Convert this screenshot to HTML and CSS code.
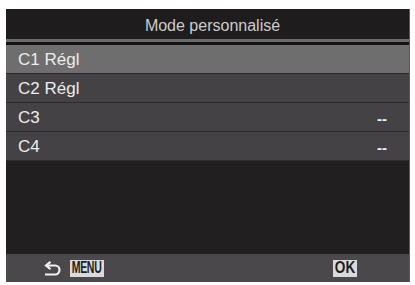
FILE: index.html
```html
<!DOCTYPE html>
<html>
<head>
<meta charset="utf-8">
<link rel="stylesheet" href="styles.css">
</head>
<body>
<div class="screen">
  <div class="title">Mode personnalisé</div>
  <div class="sep"></div>
  <div class="list">
    <div class="row sel"><span>C1 Régl</span></div>
    <div class="row"><span>C2 Régl</span></div>
    <div class="row"><span>C3</span><span class="val">--</span></div>
    <div class="row"><span>C4</span><span class="val">--</span></div>
  </div>
  <div class="space"></div>
  <div class="footer">
    <div class="left">
      <svg class="back" width="20" height="16" viewBox="0 0 20 16">
        <path d="M4 4.5 H12 A4.5 4.5 0 0 1 12 13.5 H2" fill="none" stroke="#f0f0f0" stroke-width="2.2"/>
        <path d="M7.5 0.8 L3 4.5 L7.5 8.2" fill="none" stroke="#f0f0f0" stroke-width="2.2"/>
      </svg>
      <span class="badge menu"><span class="sq">MENU</span></span>
    </div>
    <span class="badge ok"><span class="sq2">OK</span></span>
  </div>
</div>
</body>
</html>
```
FILE: styles.css
```css
html, body {
  margin: 0;
  padding: 0;
  background: #ffffff;
}
body {
  font-family: "Liberation Sans", Arial, sans-serif;
}
.screen {
  margin: 9px 0 0 6px;
  width: 404px;
  height: 273px;
  display: flex;
  flex-direction: column;
  background: #211e1f;
  border-right: 1px solid #5a5a5a;
  box-sizing: border-box;
}
.title {
  height: 30px;
  display: flex;
  align-items: center;
  justify-content: center;
  padding-top: 3px;
  padding-left: 10px;
  box-sizing: border-box;
  background: #1e1c1d;
  color: #cdcdcd;
  font-size: 16px;
}
.sep {
  height: 3px;
  background: #6b6a6b;
  border-bottom: 3px solid #141213;
}
.list {
  display: flex;
  flex-direction: column;
}
.row {
  height: 28px;
  border-bottom: 1px solid #2c2a2b;
  background: #444244;
  color: #ececec;
  font-size: 17px;
  display: flex;
  align-items: center;
  justify-content: space-between;
  padding: 2px 22px 0 12px;
  box-sizing: content-box;
  height: 26px;
}
.row.sel {
  background: #6f6e6f;
}
.val {
  font-weight: bold;
  font-size: 15px;
  color: #f4f4f4;
}
.space {
  flex: 1;
  background: #221f20;
}
.footer {
  height: 28px;
  background: #4a484a;
  display: flex;
  align-items: center;
  justify-content: space-between;
  padding: 0 52px 0 37px;
}
.left {
  display: flex;
  align-items: center;
  gap: 7px;
}
.back {
  display: block;
  margin-top: 1px;
}
.badge {
  background: #dadada;
  color: #1e1e1e;
  font-weight: bold;
  height: 17px;
  display: flex;
  align-items: center;
  justify-content: center;
  overflow: hidden;
}
.menu {
  width: 34px;
}
.ok {
  width: 24px;
}
.sq {
  display: inline-block;
  font-size: 16px;
  transform: scaleX(0.66);
  letter-spacing: -0.5px;
}
.sq2 {
  display: inline-block;
  font-size: 16px;
  transform: scaleX(0.85);
}
```
